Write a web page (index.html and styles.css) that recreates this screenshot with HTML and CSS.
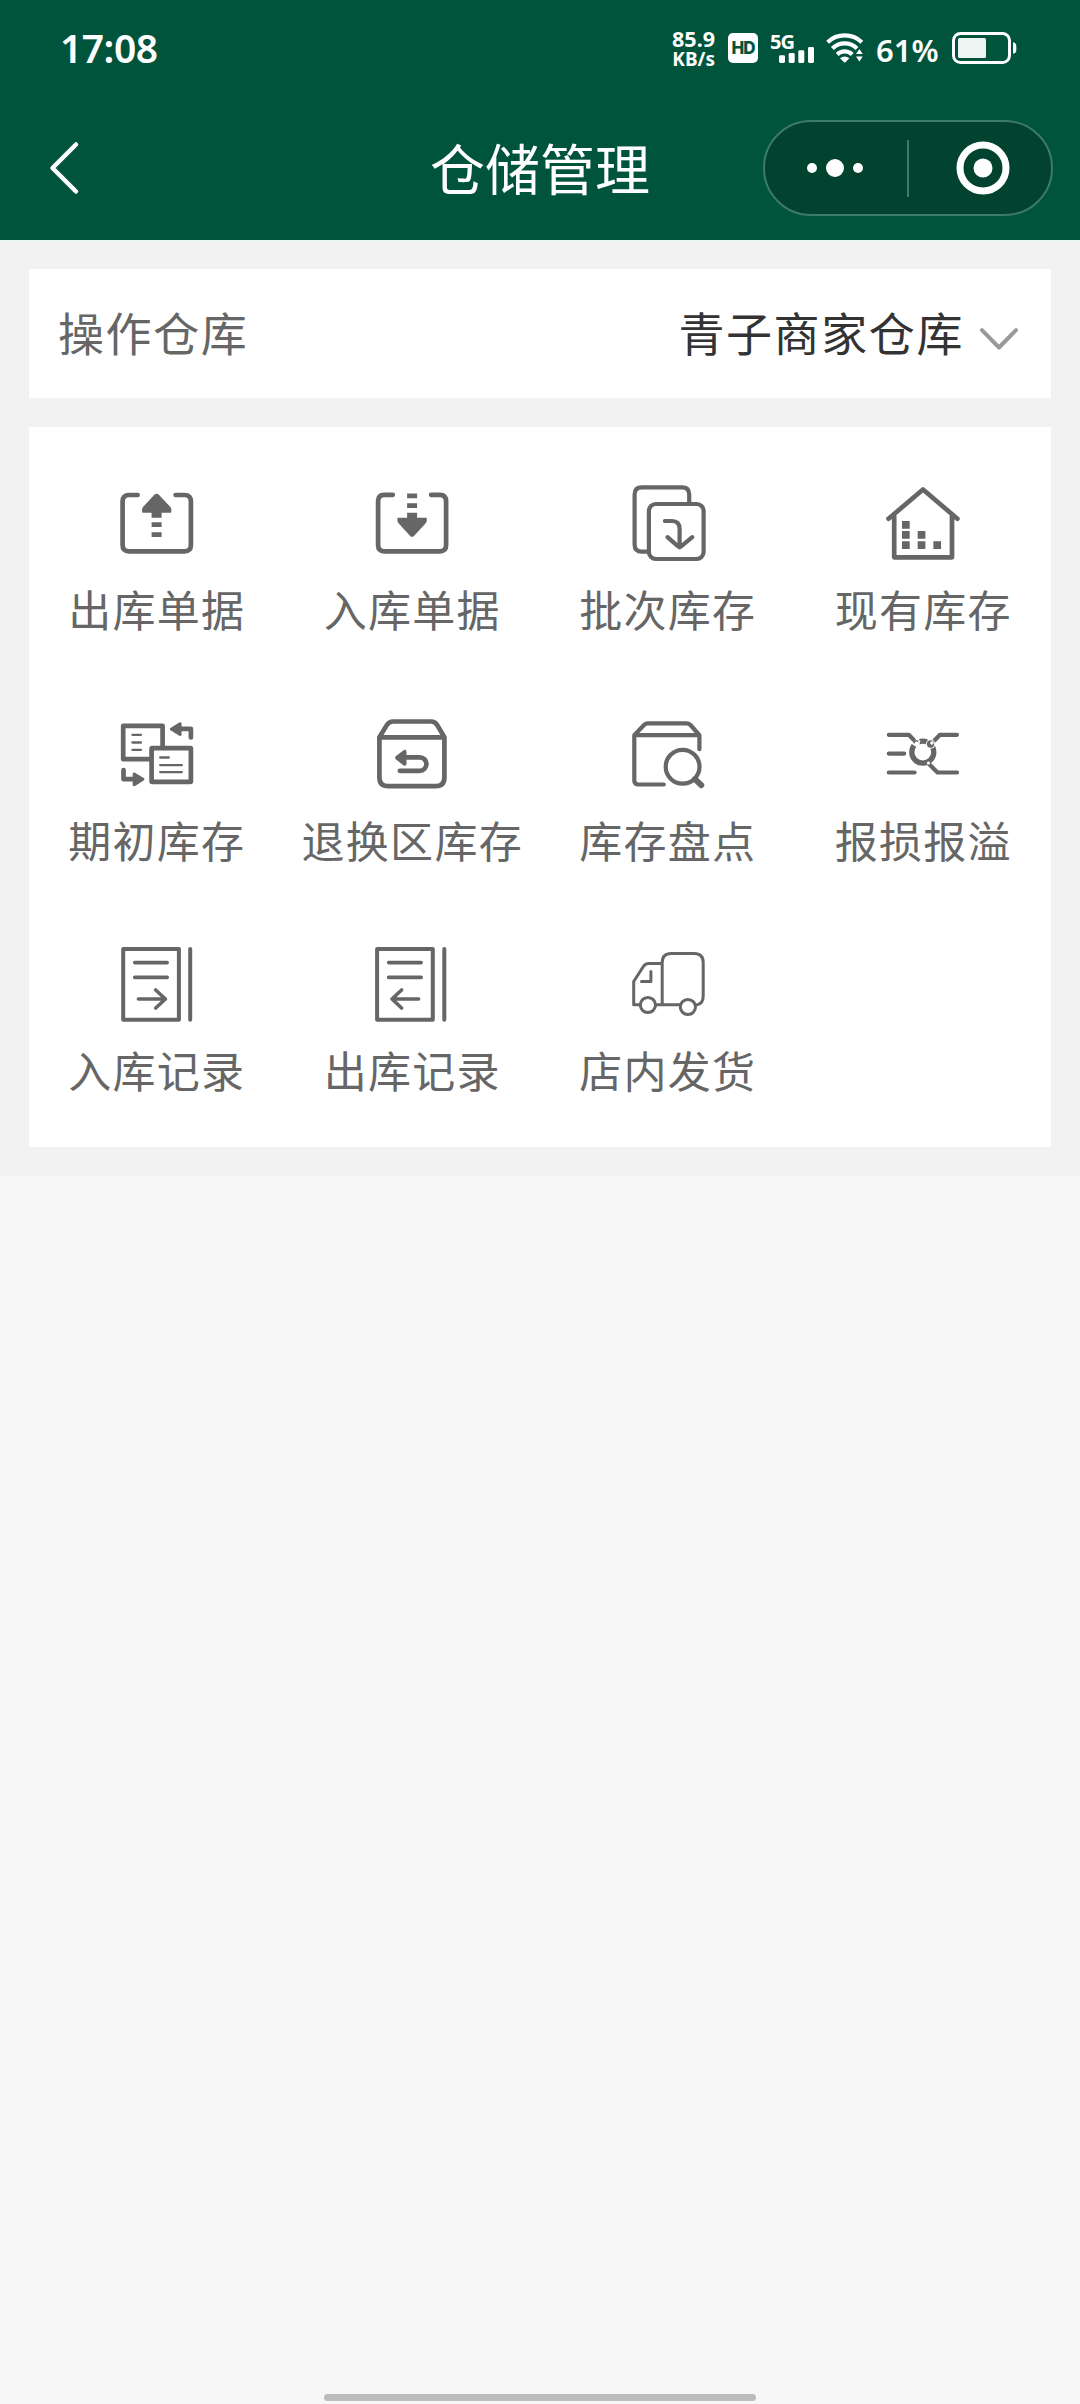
FILE: index.html
```html
<!DOCTYPE html>
<html lang="zh-CN">
<head>
<meta charset="utf-8">
<title>仓储管理</title>
<link rel="stylesheet" href="styles.css">
</head>
<body>
<header class="header">
  <div class="status">
    <span class="clock">17:08</span>
    <div class="indicators">
      <div class="speed"><span class="speed-value">85.9</span><span class="speed-unit">KB/s</span></div>
      <span class="hd">HD</span>
      <div class="signal">
        <span class="network">5G</span>
        <svg class="bars" width="36" height="16" viewBox="0 0 36 16"><rect x="0" y="8.3" width="6" height="7.7" rx="1.4"/><rect x="9.7" y="6" width="6" height="10" rx="1.4"/><rect x="19.3" y="3.3" width="6" height="12.7" rx="1.4"/><rect x="29" y="0" width="6" height="16" rx="1.4"/></svg>
      </div>
      <svg class="wifi" width="38" height="30" viewBox="0 0 38 30">
        <g fill="none" stroke="#fff" stroke-width="4.2"><path d="M1.6 9.2A25 25 0 0 1 35.8 9.2"/><path d="M6.4 15.4A17.5 17.5 0 0 1 31 15.4"/><path d="M11.2 21.4A10.8 10.8 0 0 1 26.2 21.4"/></g>
        <path fill="#fff" d="M14 25.2q4.700-3.400 9.400 0l-4 4q-.7.600-1.400 0zM30 21l3.400-5 3.400 5zM30 23.600l3.400 5 3.400-5z"/>
      </svg>
      <span class="percent">61%</span>
      <svg class="battery" width="66" height="32" viewBox="0 0 66 32"><rect x="1.500" y="1.500" width="56" height="29" rx="7" fill="none" stroke="#fff" stroke-width="3"/><rect x="6" y="6" width="28" height="20" rx="1.500" fill="#eff5f3"/><path d="M61 10.300q3.300.5 3.300 3.500v4.500q0 3-3.300 3.500z" fill="#fff"/></svg>
    </div>
  </div>
  <nav class="nav">
    <svg class="back" width="32" height="54" viewBox="0 0 32 54"><path d="M28 3.500L4.500 27 28 50.500"/></svg>
    <h1 class="title">仓储管理</h1>
    <div class="capsule">
      <svg class="more" width="60" height="20" viewBox="0 0 60 20"><circle cx="7" cy="10" r="5"/><circle cx="30" cy="10" r="9"/><circle cx="53" cy="10" r="5"/></svg>
      <span class="divider"></span>
      <svg class="close" width="54" height="54" viewBox="0 0 54 54"><circle cx="27" cy="27" r="23" fill="none" stroke="#fff" stroke-width="7"/><circle cx="27" cy="27" r="9.500" fill="#fff"/></svg>
    </div>
  </nav>
</header>
<main class="content">
  <section class="select">
    <span class="select-label">操作仓库</span>
    <span class="select-value">青子商家仓库</span>
    <svg class="chevron" width="40" height="24" viewBox="0 0 40 24"><path d="M3 3.200L20 20.500 37 3.200"/></svg>
  </section>
  <section class="menu">
    <div class="item">
      <svg class="icon" viewBox="0 0 80 80"><path class="w47" d="M20.600 12H12q-6.400 0-6.400 6.400V62q0 6.300 6.400 6.300h55.500q6.400 0 6.400-6.300V18.400q0-6.400-6.400-6.400h-8.900"/><path class="solid" d="M37.600 11.600q2-1.700 4 0L53.400 24q1.600 2.200.6 5.700h-9.400v5h-10v-5h-9.100q-1.200-3.500.5-5.700zM34.600 39.200h10V44h-10zM34.600 49.200h10V54h-10z"/></svg>
      <span class="label">出库单据</span>
    </div>
    <div class="item">
      <svg class="icon" viewBox="0 0 80 80"><path class="w47" d="M20.800 11.800h-8.600q-6.100 0-6.100 6.400V62q0 6.300 6.100 6.300h55.700q6.200 0 6.200-6.300V18.200q0-6.400-6.200-6.400h-8.800"/><path class="solid" d="M35.100 10.500h10v4.800h-10zM35.100 20.200h10V25h-10zM35.100 29.700h10v5h9.400q1 3.300-.6 5.300L42 53q-1.900 1.700-3.800 0L26.300 40q-1.600-2-.6-5.300h9.400z"/></svg>
      <span class="label">入库单据</span>
    </div>
    <div class="item">
      <svg class="icon" viewBox="0 0 80 80"><path class="w42" stroke-linecap="butt" d="M61.200 19v-7.400q0-7.200-7.200-7.200H13.800q-7.200 0-7.200 7.200v49.900q0 7.200 7.200 7.200H20"/><rect class="w42" x="20.900" y="21" width="54.700" height="55" rx="7"/><path class="w42" d="M36.900 38h7q7.700 0 7.700 8v18.500M39.500 54.200l10.600 9.200q1.500 1.200 3 0l11.200-9.200"/></svg>
      <span class="label">批次库存</span>
    </div>
    <div class="item">
      <svg class="icon" viewBox="0 0 80 80"><path class="w47" d="M5.500 35.800L40 6.500l34.400 29.300M11.200 33v41.300H69V33"/><path class="solid" d="M19 38h7.700v7.700H19zM19 48h7.700v7.700H19zM19 58.300h7.700V66H19zM34.700 48h7.700v7.700h-7.700zM34.700 58.300h7.700V66h-7.700zM50.400 58.300h7.700V66h-7.700z"/></svg>
      <span class="label">现有库存</span>
    </div>
    <div class="item">
      <svg class="icon" viewBox="0 0 80 80"><path class="w47" stroke-linecap="butt" d="M45.600 33V11.900H6.200v33.300H33"/><rect class="w47" x="34.600" y="34.200" width="39.300" height="33.600" rx=".5"/><path class="w23" d="M15.400 20.800h8.600M15.400 28.500h8.600M15.400 35.800h8.600M43.200 43.500h8.600M43.200 51.200h21.600M43.200 58.200h21.600"/><path class="w47" d="M64 14.900h9.900v8.600M6.500 56v9.200H16"/><path class="solid" d="M53.500 13.900L62.300 8.600q1.700-.8 2.300 1v11.200q-.6 1.800-2.300 1l-8.800-5.500q-1.500-1.200 0-2.400zM26.700 64L18 58.700q-1.700-.8-2.300 1v11.200q.6 1.800 2.300 1l8.700-5.500q1.500-1.200 0-2.400z"/></svg>
      <span class="label">期初库存</span>
    </div>
    <div class="item">
      <svg class="icon" viewBox="0 0 80 80"><path class="w47" d="M7.400 23.300L14.600 11.400Q17 7.500 21 7.500h38.200q4 0 6.200 3.900l7 11.900v40.200q0 8.700-8.700 8.700H16.200q-8.800 0-8.800-8.700zH72.400"/><path class="w47" d="M33 43.300h14.700a6.700 6.700 0 0 1 0 13.500H27.800"/><path class="solid" d="M24 42l7.300-5.600q2.700-1.600 3.200 1.400v12q-.5 3-3.200 1.400L24 45.400q-1.700-1.700 0-3.400z"/></svg>
      <span class="label">退换区库存</span>
    </div>
    <div class="item">
      <svg class="icon" viewBox="0 0 80 80"><path class="w42" d="M35.800 70.500H10.400q-4.100 0-4.100-4.100V21.200L16 11q1.600-1.700 4-1.700h38.500q2.300 0 4 1.700l8.900 10.200v14M6.300 21.200h65"/><circle class="w42" cx="54.600" cy="52.800" r="16.900"/><path class="w60" d="M67 65.200l6.200 6"/></svg>
      <span class="label">库存盘点</span>
    </div>
    <div class="item">
      <svg class="icon" viewBox="0 0 80 80"><path class="w42" d="M5.800 20.800h20l4.800 5M5.800 39.600h15.400M5.800 58.500h25.800M74 20.800H57l-5.800 6M46.500 50.500l8 8H74"/><circle cx="39.800" cy="38.200" r="11" fill="none" stroke="#666" stroke-width="5.300"/><path d="M29 29l5.500 4 2-5.500-3-4M45 25l6 7" fill="none" stroke="#fff" stroke-width="1.600"/><circle cx="47.600" cy="30" r="4.700" fill="#fff"/><circle cx="47.600" cy="30" r="3.700" fill="#666"/><circle cx="48.900" cy="29" r="1.700" fill="#fff"/><circle cx="33.700" cy="29.500" r="2" fill="#fff"/><circle cx="45.500" cy="49" r="1.600" fill="#fff"/></svg>
      <span class="label">报损报溢</span>
    </div>
    <div class="item">
      <svg class="icon" viewBox="0 0 80 80"><path class="w40" d="M6.200 5h55.700v70.700H6.200zM73.200 5v70.700"/><path class="w36" d="M17.700 18.600h32.500M17.700 33.400h32.500M21.400 55h27M38.700 46l9.700 9-9.700 9"/></svg>
      <span class="label">入库记录</span>
    </div>
    <div class="item">
      <svg class="icon" viewBox="0 0 80 80"><path class="w40" d="M5.100 5h55.700v70.700H5.100zM72.300 5v70.700"/><path class="w36" d="M16.600 18.600h32.600M16.600 33.400h32.600M46.600 55H20M29.600 46L20 55l9.600 9"/></svg>
      <span class="label">出库记录</span>
    </div>
    <div class="item">
      <svg class="icon" viewBox="0 0 80 80"><path class="w30" d="M34.200 60.700V18.500q0-9 9-9h23q9 0 9 9V52q0 7.500-6 8.700M34.200 19.500H21q-3.800 0-5.800 3.200L5.700 37.500v23.200h6.500M27.800 60.700h24.300M22.900 27.600v9.900h-9.400"/><circle class="w30" cx="19.900" cy="61" r="7.600"/><circle class="w30" cx="59.900" cy="63" r="7.600"/></svg>
      <span class="label">店内发货</span>
    </div>
  </section>
</main>
<div class="home-bar"></div>
</body>
</html>
```
FILE: styles.css
```css
* { box-sizing: border-box; }
body {
  margin: 0;
  min-height: 2404px;
  display: flex;
  flex-direction: column;
  background: #f7f7f7;
  font-family: "Noto Sans CJK SC", sans-serif;
}
svg { display: block; flex: none; }
.header { height: 241px; background: #01543c; border-bottom: 1px solid #e0faf1; color: #fff; }
.status { height: 96px; display: flex; justify-content: space-between; padding: 0 62px 0 60px; font-family: "Noto Sans", sans-serif; }
.clock { font-size: 39px; line-height: 95px; font-weight: 600; letter-spacing: -.5px; }
.indicators { display: flex; align-items: center; }
.speed { width: 46px; display: flex; flex-direction: column; align-items: flex-end; font-weight: 700; margin-right: 13px; }
.speed-value { font-size: 21.500px; line-height: 22px; white-space: nowrap; }
.speed-unit { font-size: 19px; line-height: 18px; white-space: nowrap; }
.hd { width: 30px; height: 30px; margin-right: 12px; border-radius: 5px; background: #fff; color: #01543c; font: 800 17px/30px Inter, sans-serif; text-align: center; letter-spacing: -1px; }
.signal { width: 45px; height: 30px; margin-right: 11px; display: flex; flex-direction: column; }
.network { font-size: 20px; font-weight: 700; line-height: 17px; height: 14px; letter-spacing: -1px; }
.bars { margin-left: 9px; fill: #fff; }
.wifi { margin-right: 12px; }
.percent { width: 76px; font-size: 31px; line-height: 42px; font-weight: 600; padding-top: 4px; }
.nav { height: 144px; display: grid; grid-template-columns: 290px 1fr 290px; align-items: center; padding: 0 27px; }
.back { margin-left: 21px; fill: none; stroke: #fff; stroke-width: 4.500; stroke-linecap: round; stroke-linejoin: round; }
.title { margin: 0; text-align: center; font-size: 55px; line-height: 80px; padding-bottom: 4px; font-weight: 400; }
.capsule { width: 290px; height: 96px; display: flex; align-items: center; justify-content: space-between; padding: 0 41px 0 40px; border: 2px solid #3d7a67; border-radius: 48px; background: #01432f; }
.more { fill: #fff; }
.divider { width: 2px; height: 57px; margin-right: 5px; background: #3d7a67; }
.content { background: #f2f2f2; padding: 28px 29px 29px; display: flex; flex-direction: column; gap: 29px; }
.select { height: 129px; padding: 0 32px 0 29px; display: flex; align-items: center; background: #fff; font-size: 46px; letter-spacing: 1.600px; }
.select-label { padding-bottom: 6px; color: #666; }
.select-value { margin-left: auto; padding-bottom: 6px; color: #333; }
.chevron { margin: 10px 0 0 15px; fill: none; stroke: #999; stroke-width: 4; stroke-linecap: round; stroke-linejoin: round; }
.menu { height: 720px; padding: 14px 0; display: grid; grid-template-columns: repeat(4, 1fr); grid-auto-rows: 230.500px; background: #fff; }
.item { display: flex; flex-direction: column; align-items: center; padding-top: 42px; }
.icon { width: 80px; height: 80px; }
.icon .solid { fill: #666; }
.w60, .w47, .w42, .w40, .w36, .w30, .w23 { fill: none; stroke: #666; stroke-linecap: round; stroke-linejoin: round; }
.w60 { stroke-width: 6; }
.w47 { stroke-width: 4.700; }
.w42 { stroke-width: 4.200; }
.w40 { stroke-width: 4; }
.w36 { stroke-width: 3.600; }
.w30 { stroke-width: 3; }
.w23 { stroke-width: 2.300; }
.label { margin-top: 15px; color: #666; font-size: 43px; line-height: 60px; letter-spacing: 1.300px; white-space: nowrap; }
.home-bar { width: 432px; height: 7px; margin: auto auto 3px; border-radius: 4px; background: #bbb; }
```
